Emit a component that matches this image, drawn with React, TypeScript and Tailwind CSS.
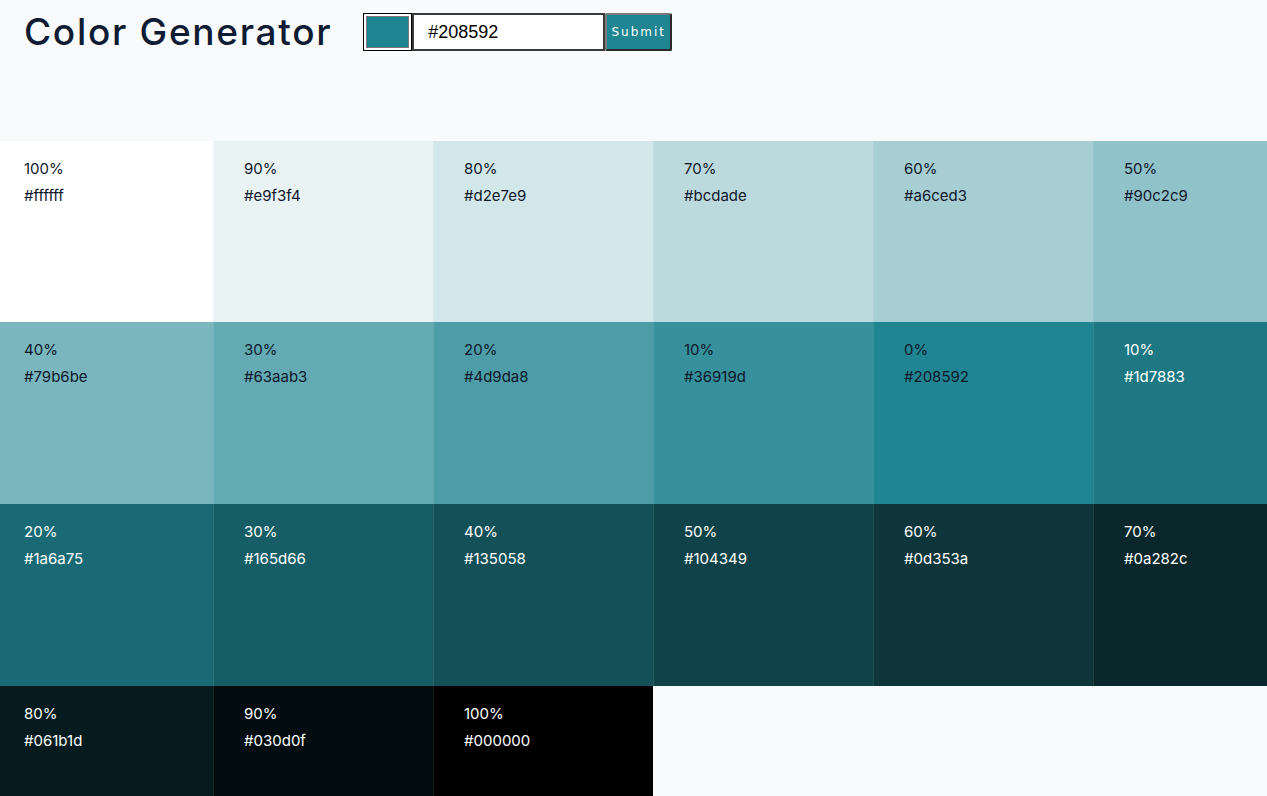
import React from 'react';

interface Swatch {
  weight: number;
  hex: string;
  light: boolean;
}

const swatches: Swatch[] = [
  { weight: 100, hex: '#ffffff', light: false },
  { weight: 90, hex: '#e9f3f4', light: false },
  { weight: 80, hex: '#d2e7e9', light: false },
  { weight: 70, hex: '#bcdade', light: false },
  { weight: 60, hex: '#a6ced3', light: false },
  { weight: 50, hex: '#90c2c9', light: false },
  { weight: 40, hex: '#79b6be', light: false },
  { weight: 30, hex: '#63aab3', light: false },
  { weight: 20, hex: '#4d9da8', light: false },
  { weight: 10, hex: '#36919d', light: false },
  { weight: 0, hex: '#208592', light: false },
  { weight: 10, hex: '#1d7883', light: true },
  { weight: 20, hex: '#1a6a75', light: true },
  { weight: 30, hex: '#165d66', light: true },
  { weight: 40, hex: '#135058', light: true },
  { weight: 50, hex: '#104349', light: true },
  { weight: 60, hex: '#0d353a', light: true },
  { weight: 70, hex: '#0a282c', light: true },
  { weight: 80, hex: '#061b1d', light: true },
  { weight: 90, hex: '#030d0f', light: true },
  { weight: 100, hex: '#000000', light: true },
];

const SingleColor: React.FC<{ swatch: Swatch; index: number }> = ({ swatch, index }) => (
  <article
    className={`pt-4 text-[15px] font-[Inter,sans-serif] ${
      swatch.light ? 'text-white' : 'text-[#0f172a]'
    } ${index % 6 !== 0 ? 'border-l border-white/10 pl-[30px]' : 'pl-[31px]'} ${
      index < 6 ? 'h-[181px]' : index < 12 ? 'h-[182px]' : 'h-[182px]'
    }`}
    style={{ backgroundColor: swatch.hex }}
  >
    <p className="leading-6">{swatch.weight}%</p>
    <p className="mt-[3px] leading-6">{swatch.hex}</p>
  </article>
);

export default function App() {
  return (
    <main className="min-h-screen bg-[#f8fafc] overflow-hidden">
      <section className="h-[141px] flex items-start pl-6 pt-[13px]">
        <h3 className="text-[37px] leading-[38px] font-medium tracking-[1.7px] text-[#0f1a33] font-[Inter,sans-serif]">
          Color Generator
        </h3>
        <form className="flex ml-[31px]" onSubmit={(e) => e.preventDefault()}>
          <div className="w-[49px] h-[38px] bg-white border border-black p-[2px]">
            <div className="w-full h-full bg-[#208592] border border-[#777]" />
          </div>
          <input
            type="text"
            defaultValue="#208592"
            className="w-[193px] h-[38px] bg-white border-2 border-[#3a3a3a] pl-[14px] text-[18px] text-black font-['Liberation_Sans',Arial,sans-serif] outline-none"
          />
          <button
            type="submit"
            className="w-[67px] h-[38px] bg-[#208592] text-white text-[12px] tracking-[2px] border-2 border-t-[#7a7a7a] border-l-[#7a7a7a] border-r-[#2a2a2a] border-b-[#2a2a2a] rounded-[2px] font-['DejaVu_Sans',sans-serif]"
          >
            Submit
          </button>
        </form>
      </section>
      <section className="-ml-[7px] w-[1320px] grid grid-cols-[repeat(6,220px)]">
        {swatches.map((s, i) => (
          <SingleColor key={i} swatch={s} index={i} />
        ))}
      </section>
    </main>
  );
}
